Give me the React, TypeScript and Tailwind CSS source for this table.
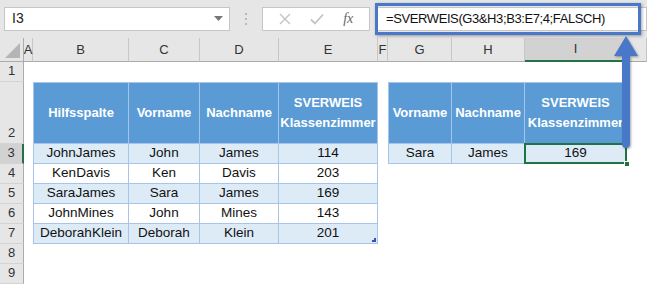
import React from 'react'

const FONT = { fontFamily: '"Liberation Sans", Arial, sans-serif' }

const colKeys = ['A', 'B', 'C', 'D', 'E', 'F', 'G', 'H', 'I', 'J']
const rowNums = [1, 2, 3, 4, 5, 6, 7, 8, 9]

const students = [
  ['JohnJames', 'John', 'James', '114'],
  ['KenDavis', 'Ken', 'Davis', '203'],
  ['SaraJames', 'Sara', 'James', '169'],
  ['JohnMines', 'John', 'Mines', '143'],
  ['DeborahKlein', 'Deborah', 'Klein', '201'],
]

const leftHeader = ['Hilfsspalte', 'Vorname', 'Nachname', 'SVERWEIS Klassenzimmer']
const rightHeader = ['Vorname', 'Nachname', 'SVERWEIS Klassenzimmer']
const lookupRow = ['Sara', 'James', '169']

function HeaderText({ text }: { text: string }) {
  if (text.startsWith('SVERWEIS')) {
    return (
      <span className="leading-[20px] text-center">
        SVERWEIS
        <br />
        Klassenzimmer
      </span>
    )
  }
  return <span>{text}</span>
}

function TableCell({
  row,
  children,
  first,
  header,
}: {
  row: number
  children?: React.ReactNode
  first?: boolean
  header?: boolean
}) {
  const banded = row % 2 === 1
  return (
    <div
      className={`relative flex items-center justify-center whitespace-nowrap border-r border-b border-[#a9c4eb] ${
        first ? 'border-l' : ''
      } ${header ? 'border-t bg-[#5b9bd5] text-white font-bold text-[13px]' : banded ? 'bg-[#ddebf7] text-[13.5px] text-[#111]' : 'bg-white text-[13.5px] text-[#111]'}`}
    >
      {children}
    </div>
  )
}

function SheetCell({ row, colIdx }: { row: number; colIdx: number }) {
  const key = colKeys[colIdx]
  // left table B2:E7
  if (row >= 2 && row <= 7 && colIdx >= 1 && colIdx <= 4) {
    const c = colIdx - 1
    if (row === 2)
      return (
        <TableCell row={row} header first={c === 0}>
          <HeaderText text={leftHeader[c]} />
        </TableCell>
      )
    return (
      <TableCell row={row} first={c === 0}>
        {students[row - 3][c]}
        {row === 7 && c === 3 && (
          <svg className="absolute right-[1px] bottom-[1px]" width="4" height="4" viewBox="0 0 4 4">
            <path d="M4 0V4H0V2H2V0Z" fill="#3a50b8" />
          </svg>
        )}
      </TableCell>
    )
  }
  // lookup table G2:I3
  if (row >= 2 && row <= 3 && colIdx >= 6 && colIdx <= 8) {
    const c = colIdx - 6
    if (row === 2)
      return (
        <TableCell row={row} header first={c === 0}>
          <HeaderText text={rightHeader[c]} />
        </TableCell>
      )
    return (
      <TableCell row={row} first={c === 0}>
        {lookupRow[c]}
        {key === 'I' && (
          <>
            <div className="absolute -left-[1px] -top-[1px] -right-[1px] -bottom-[1px] border-2 border-[#217346]" />
            <div className="absolute -right-[4px] -bottom-[4px] w-[6px] h-[6px] bg-[#217346] border border-white" />
          </>
        )}
      </TableCell>
    )
  }
  return <div className="bg-white" />
}

export default function App() {
  return (
    <div className="relative w-[647px] h-[284px] overflow-hidden bg-[#e6e6e6] select-none" style={FONT}>
      {/* formula toolbar */}
      <div className="flex items-center h-[38px] pb-[1px]">
        <div className="ml-[4px] w-[226px] h-[24px] bg-white border border-[#c6c6c6] flex items-center justify-between pl-[7px] pr-[6px]">
          <span className="text-[14px] text-[#222]">I3</span>
          <svg width="9" height="5" viewBox="0 0 9 5">
            <path d="M0 0H9L4.5 5Z" fill="#777" />
          </svg>
        </div>
        <div className="w-[32px] flex flex-col items-center gap-[3px]">
          <span className="w-[2px] h-[2px] bg-[#b8b8b8]" />
          <span className="w-[2px] h-[2px] bg-[#b8b8b8]" />
          <span className="w-[2px] h-[2px] bg-[#b8b8b8]" />
        </div>
        <div className="w-[108px] h-[24px] bg-white border border-[#c6c6c6] flex items-center justify-around px-[6px]">
          <svg width="12" height="12" viewBox="0 0 12 12">
            <path d="M1 1L11 11M11 1L1 11" stroke="#c3c3c3" strokeWidth="1.4" />
          </svg>
          <svg width="14" height="12" viewBox="0 0 14 12">
            <path d="M1 6.5L5 10.5L13 1.5" stroke="#c3c3c3" strokeWidth="1.8" fill="none" />
          </svg>
          <span className="text-[14px] italic text-[#666]" style={{ fontFamily: '"Liberation Serif", serif' }}>
            fx
          </span>
        </div>
        <div className="relative ml-[5px] flex-1 h-[24px] bg-white border border-[#c6c6c6]">
          <div className="absolute -left-[1px] -top-[5px] w-[266px] h-[32px] border-[3px] border-[#4a78c8] shadow-[1px_1px_3px_rgba(0,0,0,0.35)] flex items-center pl-[8px]">
            <span className="text-[13px] text-[#111] tracking-[-0.4px]">=SVERWEIS(G3&amp;H3;B3:E7;4;FALSCH)</span>
          </div>
        </div>
      </div>

      {/* sheet grid */}
      <div className="grid grid-cols-[24px_9px_96px_71px_79px_99px_10px_64px_73px_102px_20px] grid-rows-[24px_20px_62px_20px_20px_20px_20px_20px_20px_20px] text-[13px]">
        {/* column header row */}
        <div className="relative border-r border-b border-[#ababab] bg-[#e6e6e6]">
          <svg className="absolute right-[3px] bottom-[3px]" width="15" height="15" viewBox="0 0 15 15">
            <path d="M15 0V15H0Z" fill="#b5b5b5" />
          </svg>
        </div>
        {colKeys.map((k) => (
          <div
            key={k}
            className={`flex items-center justify-center border-r border-[#c6c6c6] text-[#333] ${
              k === 'I' ? 'bg-[#d2d2d2] border-b-2 border-b-[#217346]' : 'bg-[#e6e6e6] border-b border-b-[#ababab]'
            }`}
          >
            {k === 'J' ? '' : k}
          </div>
        ))}

        {rowNums.map((r) => (
          <React.Fragment key={r}>
            <div
              className={`flex items-end justify-center pb-[1px] border-b border-[#d4d4d4] text-[#333] ${
                r === 3 ? 'bg-[#d2d2d2] border-r-2 border-r-[#217346]' : 'bg-[#e6e6e6] border-r border-r-[#ababab]'
              }`}
            >
              {r}
            </div>
            {colKeys.map((k, i) => (
              <SheetCell key={k} row={r} colIdx={i} />
            ))}
          </React.Fragment>
        ))}
      </div>

      {/* callout arrow from the formula to I3 */}
      <svg className="absolute left-[608px] top-[32px]" width="36" height="122" viewBox="0 0 36 122">
        <defs>
          <filter id="arrowShadow" x="-30%" y="-10%" width="160%" height="130%">
            <feDropShadow dx="1" dy="1" stdDeviation="1.2" floodColor="#000" floodOpacity="0.35" />
          </filter>
        </defs>
        <g filter="url(#arrowShadow)">
          <path d="M18 4L30 24H22V112Q22 116 18 116Q14 116 14 112V24H6Z" fill="#4a78c8" />
        </g>
      </svg>
    </div>
  )
}
